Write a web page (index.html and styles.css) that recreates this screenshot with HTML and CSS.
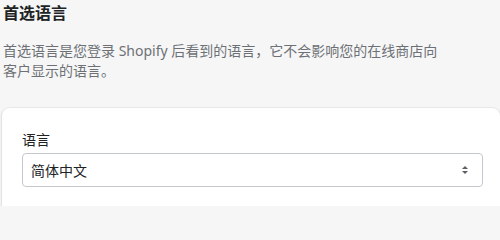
FILE: index.html
```html
<!DOCTYPE html>
<html lang="zh-CN">
<head>
<meta charset="utf-8">
<link rel="stylesheet" href="styles.css">
</head>
<body>
<div class="page">
  <div class="intro">
    <h2 class="title">首选语言</h2>
    <p class="desc">首选语言是您登录 Shopify 后看到的语言，它不会影响您的在线商店向<br>客户显示的语言。</p>
  </div>
  <div class="card">
    <label class="label">语言</label>
    <div class="select">
      <span class="value">简体中文</span>
      <svg class="arrows" width="8" height="10" viewBox="0 0 8 10"><path d="M4 1 L7 4 H1 Z" fill="#5c5f62"/><path d="M4 9 L7 6 H1 Z" fill="#5c5f62"/></svg>
    </div>
  </div>
</div>
</body>
</html>
```
FILE: styles.css
```css
html, body {
  margin: 0;
  padding: 0;
  background: #f6f6f7;
  font-family: "Noto Sans", "Noto Sans CJK SC", sans-serif;
  width: 500px;
  height: 206px;
  overflow: hidden;
}
.page {
  padding-top: 1px;
}
.intro {
  padding-left: 3px;
}
.title {
  margin: 0;
  font-size: 16px;
  line-height: 24px;
  font-weight: 700;
  color: #202223;
}
.desc {
  margin: 16px 0 0;
  font-size: 14px;
  line-height: 20px;
  color: #6d7175;
}
.card {
  margin: 27px 0 0 2px;
  width: 498px;
  box-sizing: border-box;
  background: #fff;
  border-radius: 8px;
  box-shadow: 0 0 0 1px rgba(63,63,68,0.05), 0 1px 3px rgba(63,63,68,0.15);
  padding: 22px 17px 40px 20px;
}
.label {
  display: block;
  font-size: 14px;
  line-height: 20px;
  color: #202223;
  margin-bottom: 3px;
}
.select {
  display: flex;
  align-items: center;
  justify-content: space-between;
  height: 34px;
  box-sizing: border-box;
  border: 1px solid #c4c8cc;
  border-radius: 4px;
  padding: 0 13px 0 8px;
}
.value {
  font-size: 14px;
  color: #202223;
}
.arrows {
  display: block;
}
```
